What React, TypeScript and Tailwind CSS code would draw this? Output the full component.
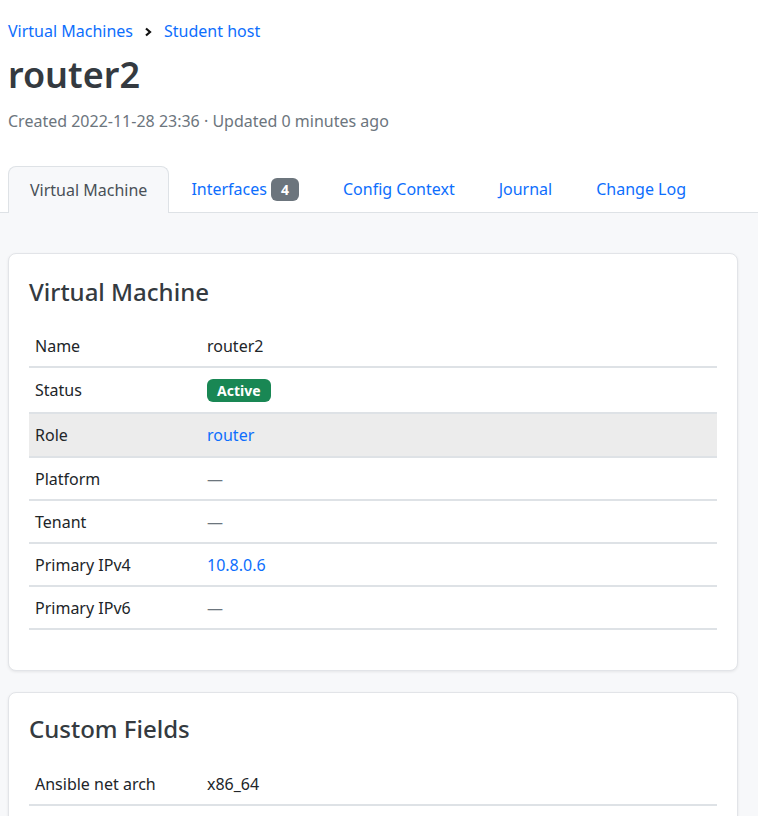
import React from 'react';

const font = { fontFamily: '"Noto Sans", "Open Sans", sans-serif' };

type Row = { label: string; value: React.ReactNode; h: string; hover?: boolean };

const Dash = () => <span className="text-[#6c757d]">—</span>;

const vmRows: Row[] = [
  { label: 'Name', value: 'router2', h: 'h-[42px]' },
  {
    label: 'Status',
    value: (
      <span className="inline-flex h-[23px] items-center rounded-[6px] bg-[#198754] px-[10px] text-[14px] font-bold text-white">
        Active
      </span>
    ),
    h: 'h-[46px]',
  },
  { label: 'Role', value: <a className="text-[#0d6efd]">router</a>, h: 'h-[44px]', hover: true },
  { label: 'Platform', value: <Dash />, h: 'h-[43px]' },
  { label: 'Tenant', value: <Dash />, h: 'h-[43px]' },
  { label: 'Primary IPv4', value: <a className="text-[#0d6efd]">10.8.0.6</a>, h: 'h-[43px]' },
  { label: 'Primary IPv6', value: <Dash />, h: 'h-[43px]' },
];

function Card({ title, rows, head }: { title: string; rows: Row[]; head: string }) {
  return (
    <div className="rounded-[8px] border border-[#e2e4e8] bg-white px-[20px] pb-[40px] shadow-[0_1px_3px_rgba(0,0,0,0.08)]">
      <h2 className={`flex items-start text-[24px] font-medium leading-[29px] text-[#343a40] ${head}`}>
        {title}
      </h2>
      <div>
        {rows.map(r => (
          <div
            key={r.label}
            className={`flex items-center border-b-2 border-[#dee2e6] text-[16px] text-[#212529] ${r.h} ${r.hover ? 'bg-[#ececec]' : ''}`}
          >
            <div className="w-[178px] pl-[6px]">{r.label}</div>
            <div className="flex-1">{r.value}</div>
          </div>
        ))}
      </div>
    </div>
  );
}

export default function App() {
  const tabs = ['Config Context', 'Journal', 'Change Log'];
  return (
    <div style={font} className="min-h-[816px] bg-[#f7f8fa]">
      {/* Header */}
      <div className="bg-white px-[8px]">
        <div className="flex h-[50px] items-end pb-[7px] text-[16px]">
          <a className="text-[#0d6efd]">Virtual Machines</a>
          <svg className="mx-[11px] mb-[6px]" width="9" height="10" viewBox="0 0 9 10">
            <path d="M2 1.5 L6 5 L2 8.5" fill="none" stroke="#111" strokeWidth="2.2" />
          </svg>
          <a className="text-[#0d6efd]">Student host</a>
        </div>
        <h1 className="mt-[3px] text-[36px] font-semibold leading-[44px] text-[#343a40]">router2</h1>
        <div className="mt-[12px] text-[16px] text-[#6c757d]">Created 2022-11-28 23:36 · Updated 0 minutes ago</div>

        {/* Tabs */}
        <div className="-mx-[8px] mt-[33px] flex h-[47px] items-stretch border-b border-[#dee2e6] px-[8px] text-[16px]">
          <div className="-mb-px flex items-center rounded-t-[8px] border border-b-0 border-[#dee2e6] bg-[#f7f8fa] px-[21px] text-[#495057]">
            Virtual Machine
          </div>
          <div className="flex items-center px-[22px] text-[#0d6efd]">
            Interfaces
            <span className="ml-[4px] inline-flex h-[23px] w-[28px] items-center justify-center rounded-[6px] bg-[#6c757d] text-[14px] font-bold text-white">
              4
            </span>
          </div>
          {tabs.map(t => (
            <div key={t} className="flex items-center px-[22px] text-[#0d6efd]">
              {t}
            </div>
          ))}
        </div>
      </div>

      {/* Content */}
      <div className="flex flex-col gap-[21px] px-[8px] pr-[20px] pt-[40px]">
        <Card title="Virtual Machine" rows={vmRows} head="h-[72px] pt-[23px]" />
        <Card
          title="Custom Fields"
          rows={[{ label: 'Ansible net arch', value: 'x86_64', h: 'h-[42px]' }]}
          head="h-[71px] pt-[21px]"
        />
      </div>
    </div>
  );
}
